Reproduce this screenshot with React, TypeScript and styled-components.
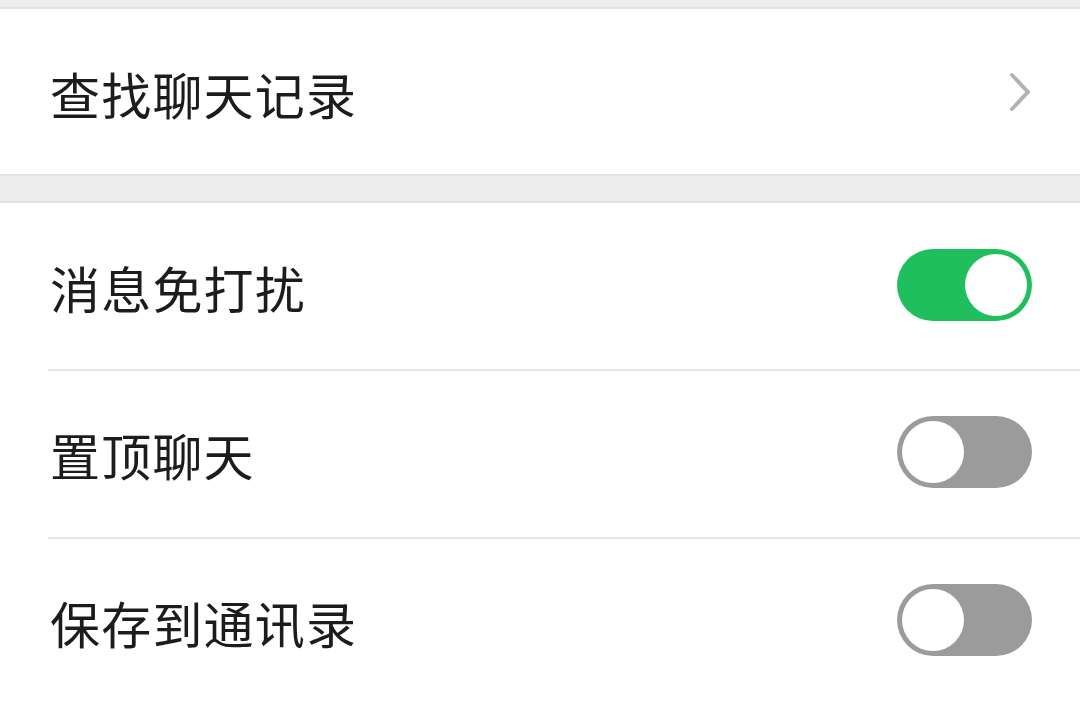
import React, { useState } from "react";
import styled, { createGlobalStyle } from "styled-components";

const Global = createGlobalStyle`
  html, body { margin: 0; padding: 0; background: #ededed; }
  body { font-family: "Noto Sans CJK SC", "Noto Sans", sans-serif; }
`;

const Page = styled.div`
  padding-top: 7px;
  display: flex;
  flex-direction: column;
  gap: 25px;
  min-height: 701px;
  box-sizing: border-box;
`;

const Group = styled.div`
  background: #ffffff;
  border-top: 2px solid #e2e2e2;
  border-bottom: 2px solid #e2e2e2;
  display: flex;
  flex-direction: column;
`;

const LastGroup = styled(Group)`
  flex: 1;
  border-bottom: none;
`;

const Row = styled.div<{ $h: number; $divider?: boolean }>`
  height: ${(p) => p.$h}px;
  display: flex;
  align-items: center;
  justify-content: space-between;
  padding: 0 48px 0 50px;
  position: relative;
  box-sizing: border-box;
  ${(p) =>
    p.$divider
      ? `&::before { content: ""; position: absolute; top: 0; left: 48px; right: 0; height: 2px; background: #e6e6e6; }`
      : ""}
`;

const Label = styled.span`
  font-size: 50px;
  color: #1c1c1c;
  letter-spacing: 1.2px;
  line-height: 1;
  padding-top: 2px;
`;

const Track = styled.button<{ $on: boolean }>`
  width: 135px;
  height: 72px;
  border-radius: 36px;
  border: none;
  padding: 0;
  background: ${(p) => (p.$on ? "#1fbf5e" : "#9b9b9b")};
  position: relative;
  cursor: pointer;
  flex-shrink: 0;
  margin-top: -2px;
`;

const Knob = styled.span<{ $on: boolean }>`
  position: absolute;
  top: 5px;
  left: ${(p) => (p.$on ? "68px" : "5px")};
  width: 62px;
  height: 62px;
  border-radius: 50%;
  background: #ffffff;
`;

const Chevron = () => (
  <svg width="24" height="40" viewBox="0 0 24 40" fill="none">
    <path d="M4 3 L20 20 L4 37" stroke="#b3b3b3" strokeWidth="4" strokeLinecap="round" strokeLinejoin="round" />
  </svg>
);

const Toggle: React.FC<{ initial: boolean }> = ({ initial }) => {
  const [on, setOn] = useState(initial);
  return (
    <Track $on={on} onClick={() => setOn(!on)} aria-pressed={on}>
      <Knob $on={on} />
    </Track>
  );
};

export default function App() {
  return (
    <>
      <Global />
      <Page>
        <Group>
          <Row $h={165}>
            <Label>查找聊天记录</Label>
            <Chevron />
          </Row>
        </Group>
        <LastGroup>
          <Row $h={166}>
            <Label>消息免打扰</Label>
            <Toggle initial={true} />
          </Row>
          <Row $h={168} $divider>
            <Label>置顶聊天</Label>
            <Toggle initial={false} />
          </Row>
          <Row $h={168} $divider>
            <Label>保存到通讯录</Label>
            <Toggle initial={false} />
          </Row>
        </LastGroup>
      </Page>
    </>
  );
}
